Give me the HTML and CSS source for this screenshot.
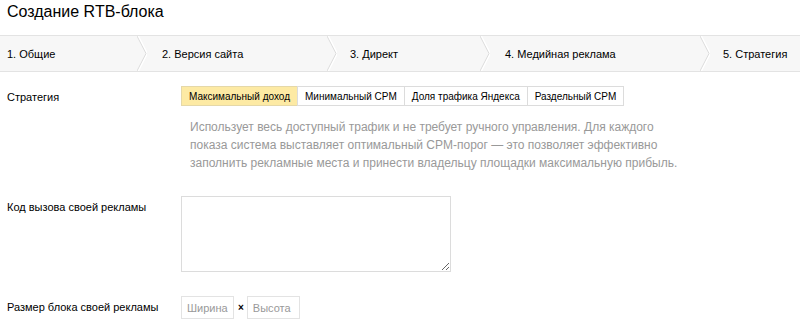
FILE: index.html
```html
<!DOCTYPE html>
<html lang="ru">
<head>
    <meta charset="UTF-8">
    <meta name="viewport" content="width=device-width, initial-scale=1.0">
    <title>Создание RTB-блока</title>
    <link rel="stylesheet" href="styles.css">
</head>
<body>
    <h1 class="page-title">Создание RTB-блока</h1>

    <!-- Шаги мастера -->
    <div class="steps">
        <div class="step step-1">1. Общие</div>
        <svg class="step-sep" width="10" height="35" viewBox="0 0 10 35"><polyline points="1,0 10,17.5 1,35" fill="none" stroke="#fff" stroke-width="2"/><polyline points="0,0 9,17.5 0,35" fill="none" stroke="#dcdcdc" stroke-width="1"/></svg>
        <div class="step step-2">2. Версия сайта</div>
        <svg class="step-sep" width="10" height="35" viewBox="0 0 10 35"><polyline points="1,0 10,17.5 1,35" fill="none" stroke="#fff" stroke-width="2"/><polyline points="0,0 9,17.5 0,35" fill="none" stroke="#dcdcdc" stroke-width="1"/></svg>
        <div class="step step-3">3. Директ</div>
        <svg class="step-sep" width="10" height="35" viewBox="0 0 10 35"><polyline points="1,0 10,17.5 1,35" fill="none" stroke="#fff" stroke-width="2"/><polyline points="0,0 9,17.5 0,35" fill="none" stroke="#dcdcdc" stroke-width="1"/></svg>
        <div class="step step-4">4. Медийная реклама</div>
        <svg class="step-sep" width="10" height="35" viewBox="0 0 10 35"><polyline points="1,0 10,17.5 1,35" fill="none" stroke="#fff" stroke-width="2"/><polyline points="0,0 9,17.5 0,35" fill="none" stroke="#dcdcdc" stroke-width="1"/></svg>
        <div class="step step-5">5. Стратегия</div>
    </div>

    <div class="form">
        <div class="row">
            <div class="label">Стратегия</div>
            <div class="field">
                <div class="tabs">
                    <button class="tab active">Максимальный доход</button>
                    <button class="tab">Минимальный CPM</button>
                    <button class="tab">Доля трафика Яндекса</button>
                    <button class="tab">Раздельный CPM</button>
                </div>
                <p class="hint">Использует весь доступный трафик и не требует ручного управления. Для каждого показа система выставляет оптимальный CPM-порог — это позволяет эффективно заполнить рекламные места и принести владельцу площадки максимальную прибыль.</p>
            </div>
        </div>

        <div class="row row-code">
            <div class="label">Код вызова своей рекламы</div>
            <div class="field">
                <textarea class="code"></textarea>
            </div>
        </div>

        <div class="row row-size">
            <div class="label">Размер блока своей рекламы</div>
            <div class="field size">
                <input class="size-input" type="text" placeholder="Ширина">
                <span class="times">×</span>
                <input class="size-input" type="text" placeholder="Высота">
            </div>
        </div>
    </div>
</body>
</html>
```

FILE: styles.css
```css
body {
    font-family: "Liberation Sans", Arial, sans-serif;
    margin: 0;
    padding: 0;
    background-color: #fff;
    color: #000;
}
.page-title {
    font-size: 16px;
    font-weight: normal;
    margin: 0;
    padding: 1px 7px 0;
    height: 34px;
    line-height: 22px;
}
.steps {
    display: flex;
    align-items: center;
    height: 35px;
    background-color: #f7f7f7;
    border-top: 1px solid #e3e3e3;
    border-bottom: 1px solid #e3e3e3;
    font-size: 11px;
}
.step {
    flex: none;
    box-sizing: border-box;
}
.step-1 { width: 137px; padding-left: 7px; }
.step-2 { width: 180px; padding-left: 15px; }
.step-3 { width: 143px; padding-left: 13px; }
.step-4 { width: 210px; padding-left: 15px; }
.step-5 { flex: 1; padding-left: 13px; }
.step-sep {
    flex: none;
    display: block;
}
.form {
    padding-top: 14px;
}
.row {
    display: flex;
    font-size: 11px;
}
.label {
    width: 181px;
    flex: none;
    box-sizing: border-box;
    padding-left: 7px;
    padding-top: 5px;
}
.field {
    flex: 1;
}
.tabs {
    display: flex;
}
.tab {
    font-family: "Liberation Sans", Arial, sans-serif;
    font-size: 10px;
    height: 20px;
    padding: 0 7px;
    margin: 0 -1px 0 0;
    background: #fff;
    border: 1px solid #dcdcdc;
    color: #000;
}
.tab.active {
    background: #fdeaa4;
    border-color: #e5d8a8;
}
.hint {
    color: #999;
    font-size: 12px;
    margin: 12px 0 0 9px;
    width: 500px;
    line-height: 18px;
}
.row-code {
    margin-top: 24px;
}
.code {
    width: 270px;
    height: 76px;
    box-sizing: border-box;
    border: 1px solid #dcdcdc;
    margin: 0;
    display: block;
}
.row-size {
    margin-top: 24px;
}
.size {
    display: flex;
    align-items: center;
}
.size-input {
    width: 53px;
    height: 23px;
    box-sizing: border-box;
    border: 1px solid #e3e3e3;
    padding: 0 5px;
    font-family: "Liberation Sans", Arial, sans-serif;
    font-size: 11px;
}
.size-input::placeholder {
    color: #999;
}
.times {
    font-size: 10px;
    font-weight: bold;
    padding: 0 3px 0 4px;
}
```
